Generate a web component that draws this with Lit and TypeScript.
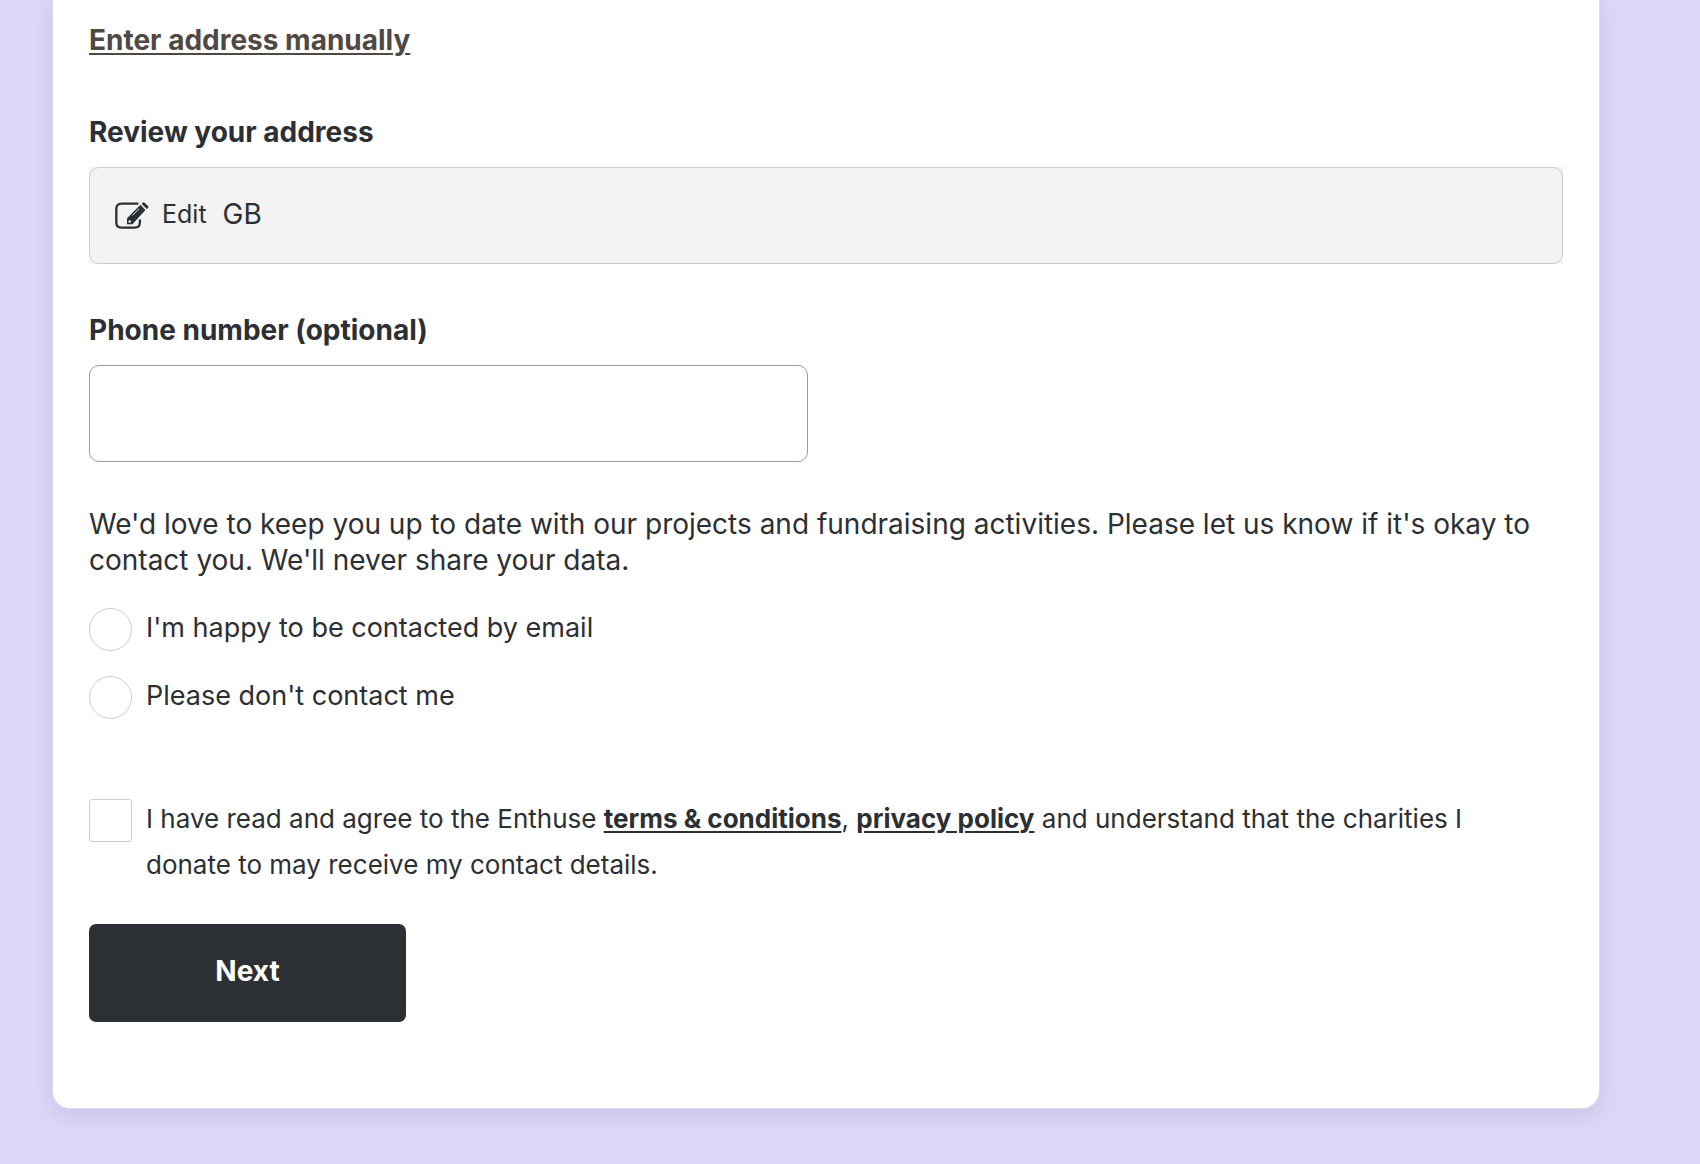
import { LitElement, html, css } from "lit";
import { customElement } from "lit/decorators.js";

@customElement("edit-icon")
export class EditIcon extends LitElement {
  static styles = css`
    :host {
      display: block;
      width: 36px;
      height: 30px;
    }
    .icon {
      display: block;
    }
  `;

  render() {
    return html`
      <svg class="icon" width="36" height="30" viewBox="0 -1 36 30" fill="none" aria-hidden="true">
        <path
          d="M23.5 3.7H7.4Q2.3 3.7 2.3 8.8V22.5Q2.3 27.6 7.4 27.6H20.8Q25.9 27.6 25.9 22.5V20.3"
          stroke="#2c2f33"
          stroke-width="2.3"
          stroke-linecap="round"
        />
        <path d="M13 24.3V18.2L26.4 4.8L31.5 9.9L18.4 24.3Z" fill="#2c2f33" />
        <path d="M27.6 3.7L28.8 2.6Q29.7 1.9 30.6 2.7L34 6.1Q34.8 7 34.1 7.9L32.8 9Z" fill="#2c2f33" />
        <path d="M18.4 15.4L25 8.8" stroke="#f3f3f3" stroke-width="0.9" />
        <circle cx="15.7" cy="21.5" r="1.3" fill="#f3f3f3" />
      </svg>
    `;
  }
}

@customElement("app-root")
export class AppRoot extends LitElement {
  static styles = css`
    :host {
      display: block;
      box-sizing: border-box;
      min-height: 100vh;
      padding: 0 100px 55px 52px;
      background: #dcd6f7;
      color: #2c2f33;
      font-family: Inter, "Liberation Sans", sans-serif;
      font-size: 28px;
    }
    * {
      box-sizing: border-box;
    }
    .card {
      display: flex;
      flex-direction: column;
      padding: 22px 36px 86px;
      border: 1px solid #dedce2;
      border-top: 0;
      border-radius: 0 0 18px 18px;
      background: #fff;
      box-shadow: 0 6px 20px rgba(60, 40, 110, 0.1);
    }
    .manual {
      align-self: flex-start;
      color: #504943;
      font-weight: 700;
      line-height: 36px;
      text-decoration-thickness: 2px;
      text-underline-offset: 3px;
    }
    .label {
      margin: 0 0 17px;
      font-size: 28px;
      font-weight: 700;
      line-height: 36px;
    }
    .review {
      display: flex;
      flex-direction: column;
      margin-top: 56px;
    }
    .panel {
      background: #f3f3f3;
    }
    .address {
      display: flex;
      align-items: center;
      gap: 16px;
      height: 97px;
      padding: 0 24px 4px;
      border: 1px solid #ccc;
      border-radius: 10px;
    }
    .edit {
      display: flex;
      align-items: center;
      gap: 12px;
      padding: 0;
      border: 0;
      background: none;
      color: inherit;
      font-family: inherit;
      font-size: 25px;
      cursor: pointer;
    }
    .phone {
      display: flex;
      flex-direction: column;
      margin-top: 48px;
    }
    .input {
      width: calc(50% - 18px);
      height: 97px;
      padding: 0 24px;
      border: 1px solid #9b9b9b;
      border-radius: 10px;
      background: #fff;
      color: inherit;
      font-family: inherit;
      font-size: 28px;
    }
    .contact {
      display: flex;
      flex-direction: column;
      gap: 25px;
      margin: 44px 0 0;
      padding: 0;
      border: 0;
    }
    .intro {
      margin-bottom: 30px;
      padding: 0;
      line-height: 36px;
    }
    .choice {
      display: flex;
      gap: 14px;
    }
    .choice-text {
      font-size: 27px;
      line-height: 40px;
    }
    .tick {
      appearance: none;
      flex: none;
      width: 43px;
      height: 43px;
      margin: 0;
      border: 1px solid #ccc;
      background: #fff;
    }
    .tick:checked {
      border: 12px solid #2c2f33;
    }
    .radio {
      border-radius: 50%;
    }
    .box {
      margin-top: 3px;
      border-radius: 3px;
    }
    .terms {
      margin-top: 77px;
      padding-right: 36px;
    }
    .terms-text {
      font-size: 26px;
      line-height: 46px;
    }
    .link {
      color: inherit;
      font-weight: 700;
      text-decoration-thickness: 2px;
      text-underline-offset: 3px;
    }
    .next {
      align-self: flex-start;
      min-width: 317px;
      height: 98px;
      margin-top: 36px;
      padding: 0 24px 4px;
      border: 0;
      border-radius: 7px;
      background: #2c2f33;
      color: #fff;
      font-family: inherit;
      font-size: 28px;
      font-weight: 700;
      cursor: pointer;
    }
  `;

  render() {
    return html`
      <form class="card" @submit=${(e: Event) => e.preventDefault()}>
        <a class="manual" href="#manual">Enter address manually</a>

        <section class="review">
          <h2 class="label">Review your address</h2>
          <div class="panel">
            <div class="address">
              <button class="edit" type="button"><edit-icon></edit-icon>Edit</button>
              <span>GB</span>
            </div>
          </div>
        </section>

        <div class="phone">
          <label class="label" for="phone">Phone number (optional)</label>
          <input class="input" id="phone" type="tel" />
        </div>

        <fieldset class="contact">
          <legend class="intro">
            We'd love to keep you up to date with our projects and fundraising activities. Please let us know if it's
            okay to contact you. We'll never share your data.
          </legend>
          <label class="choice">
            <input class="tick radio" type="radio" name="contact" value="email" />
            <span class="choice-text">I'm happy to be contacted by email</span>
          </label>
          <label class="choice">
            <input class="tick radio" type="radio" name="contact" value="none" />
            <span class="choice-text">Please don't contact me</span>
          </label>
        </fieldset>

        <div class="choice terms">
          <input class="tick box" id="agree" type="checkbox" />
          <label class="terms-text" for="agree">
            I have read and agree to the Enthuse <a class="link" href="#terms">terms &amp; conditions</a>,
            <a class="link" href="#privacy">privacy policy</a> and understand that the charities I donate to may receive
            my contact details.
          </label>
        </div>

        <button class="next" type="submit">Next</button>
      </form>
    `;
  }
}
